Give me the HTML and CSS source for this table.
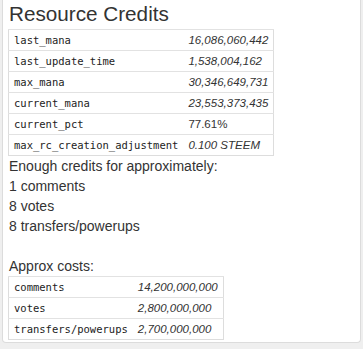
FILE: index.html
```html
<!DOCTYPE html>
<html>
<head>
<meta charset="utf-8">
<link rel="stylesheet" href="styles.css">
</head>
<body>
<div class="panel">
  <h3 class="title">Resource Credits</h3>
  <table class="kv">
    <tr><td class="key">last_mana</td><td class="val it">16,086,060,442</td></tr>
    <tr><td class="key">last_update_time</td><td class="val it">1,538,004,162</td></tr>
    <tr><td class="key">max_mana</td><td class="val it">30,346,649,731</td></tr>
    <tr><td class="key">current_mana</td><td class="val it">23,553,373,435</td></tr>
    <tr><td class="key">current_pct</td><td class="val">77.61%</td></tr>
    <tr><td class="key">max_rc_creation_adjustment</td><td class="val it">0.100 STEEM</td></tr>
  </table>
  <div class="text">
    Enough credits for approximately:<br>
    1 comments<br>
    8 votes<br>
    8 transfers/powerups<br>
    <br>
    Approx costs:
  </div>
  <table class="kv">
    <tr><td class="key">comments</td><td class="val it">14,200,000,000</td></tr>
    <tr><td class="key">votes</td><td class="val it">2,800,000,000</td></tr>
    <tr><td class="key">transfers/powerups</td><td class="val it">2,700,000,000</td></tr>
  </table>
</div>
</body>
</html>
```
FILE: styles.css
```css
html, body {
  margin: 0;
  padding: 0;
  background: #efefef;
}
body {
  font-family: "Liberation Sans", Arial, sans-serif;
  font-size: 14px;
  line-height: 20px;
  color: #333;
}
.panel {
  margin-left: 2px;
  width: 347px;
  background: #fff;
  border: 1px solid #dcdcdc;
  border-top: 0;
  border-radius: 0 0 4px 4px;
  padding: 2px 5px 2px 5px;
}
.title {
  margin: 0 0 3px 1px;
  font-size: 20.7px;
  line-height: 24px;
  font-weight: normal;
  color: #333;
}
.kv {
  border-collapse: collapse;
  border: 1px solid #ddd;
}
.kv td {
  border-top: 1px solid #e2e2e2;
  padding: 0 5px;
  height: 20px;
  line-height: 20px;
  white-space: nowrap;
}
.key {
  font-family: "DejaVu Sans Mono", "Liberation Mono", monospace;
  font-size: 10.5px;
  color: #222;
}
.val {
  font-size: 11.5px;
}
.it {
  font-style: italic;
}
.text {
  padding-left: 1px;
}
```
